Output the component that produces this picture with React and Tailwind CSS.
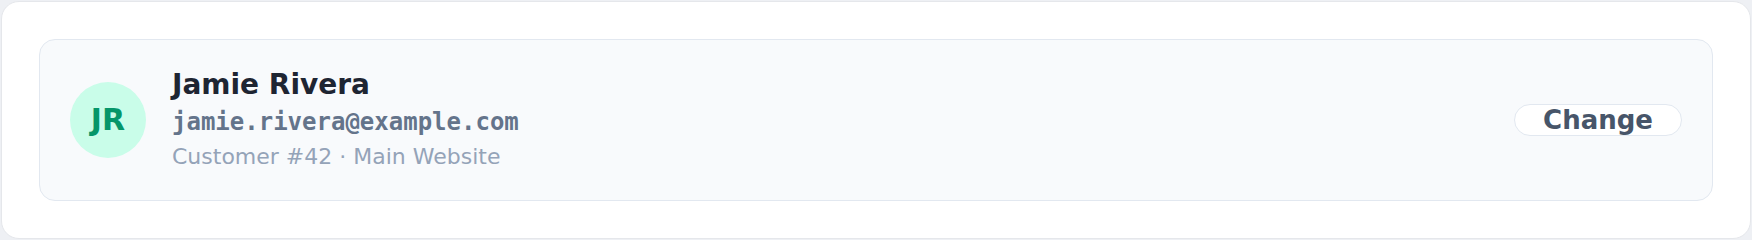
const customer = {
  initials: 'JR',
  name: 'Jamie Rivera',
  email: 'jamie.rivera@example.com',
  meta: 'Customer #42 · Main Website',
};

const App = () => {
  return (
    <div className="w-[1752px] h-[240px] p-px bg-[#eef0f4] font-['DejaVu_Sans',sans-serif]">
      {/* Outer card */}
      <div className="h-full rounded-[18px] border border-[#e5e7eb] bg-white p-[37px]">
        {/* Customer row */}
        <div className="flex items-center gap-[26px] rounded-2xl border border-[#e2e8f0] bg-[#f8fafc] px-[30px] py-7">
          <div className="flex h-[76px] w-[76px] shrink-0 items-center justify-center rounded-full bg-[#c9fde9] text-[30px] font-bold leading-none text-[#059669]">
            {customer.initials}
          </div>

          <div className="flex min-w-0 flex-1 flex-col">
            <div className="text-[28px] font-bold leading-[34px] text-[#1e2532]">
              {customer.name}
            </div>
            <div className="mt-1 font-['DejaVu_Sans_Mono',monospace] text-[24px] font-semibold leading-[32px] text-[#64748b]">
              {customer.email}
            </div>
            <div className="mt-1 text-[22px] leading-[30px] text-[#94a3b8]">
              {customer.meta}
            </div>
          </div>

          <button className="rounded-full border border-[#e2e8f0] bg-white px-[28px] text-[26px] font-bold leading-[30px] text-[#475569]">
            Change
          </button>
        </div>
      </div>
    </div>
  );
};

export default App;
